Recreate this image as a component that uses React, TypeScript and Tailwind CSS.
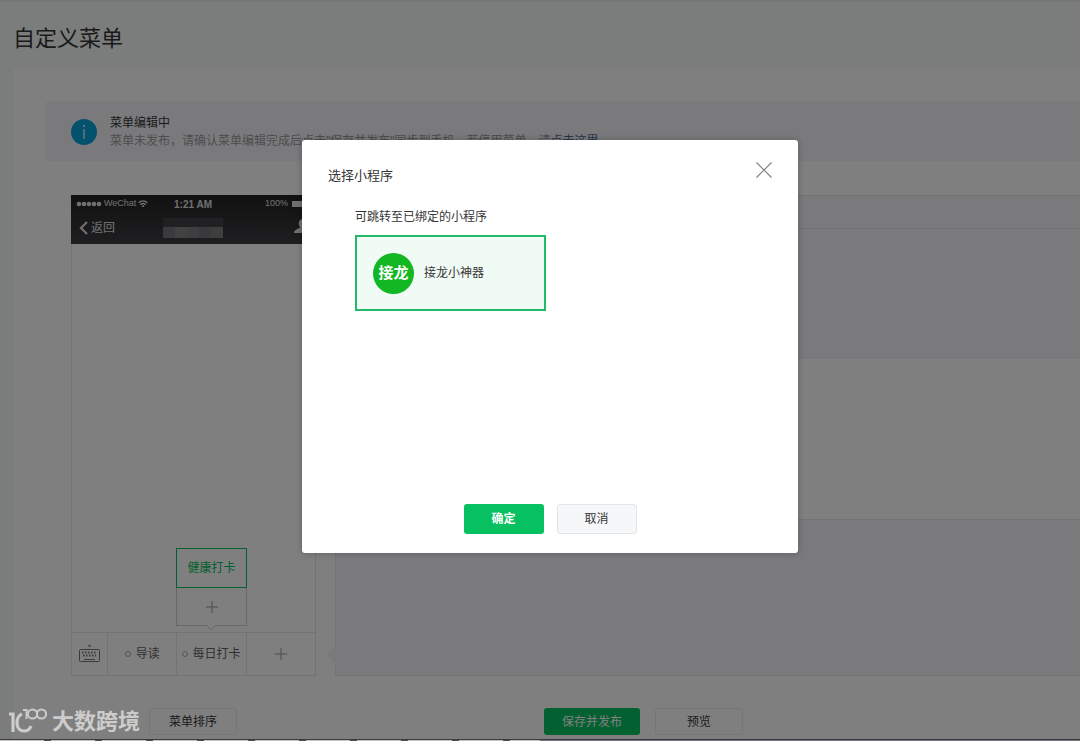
import { useState } from "react";

function Plus({ className }: { className: string }) {
  return (
    <svg viewBox="0 0 12 12" className={className} fill="none" stroke="currentColor">
      <path d="M6 0v12M0 6h12" />
    </svg>
  );
}

function PhonePreview() {
  return (
    <div className="flex h-[481px] w-[245px] shrink-0 flex-col border border-[#e7e7eb] bg-white">
      {/* Status bar + chat title */}
      <div className="-mx-px -mt-px h-[49px] bg-linear-to-b from-[#222224] to-[#3e3e42] text-[#e0e0e0]">
        <div className="flex h-[18px] items-center text-[9px]">
          <svg viewBox="0 0 26 6" className="ml-[5px] h-[6px] w-[26px]" fill="#e0e0e0">
            <circle cx="3" cy="3" r="2.3" />
            <circle cx="8" cy="3" r="2.3" />
            <circle cx="13" cy="3" r="2.3" />
            <circle cx="18" cy="3" r="2.3" />
            <circle cx="23" cy="3" r="2.3" />
          </svg>
          <span className="ml-[2px] w-[32px]">WeChat</span>
          <svg viewBox="0 0 10 8" className="ml-[2px] h-[8px] w-[10px]" fill="none" stroke="#e0e0e0" strokeWidth="1.4">
            <path d="M.6 2.8c2.6-2.4 6.2-2.4 8.8 0M2.3 4.7c1.6-1.4 3.800-1.400 5.400 0M4 6.500c.6-.5 1.400-.5 2 0" />
          </svg>
          <span className="ml-[26px] w-[70px] text-[10px] font-bold">1:21 AM</span>
          <span className="ml-[21px]">100%</span>
          <span className="ml-1 h-[6px] w-[16px] bg-[#e0e0e0]" />
        </div>
        <div className="flex h-[30px] items-center">
          <svg viewBox="0 0 9 14" className="ml-2 h-[14px] w-[9px]" fill="none" stroke="#e0e0e0" strokeWidth="2.200">
            <path d="M8 1L2 7l6 6" />
          </svg>
          <span className="ml-[3px] text-xs">返回</span>
          <span className="ml-12 flex h-[20px] w-[60px] flex-col">
            <span className="h-[9px] bg-[#434347]" />
            <span className="grid h-[11px] grid-cols-5">
              <span className="bg-[#77777a]" />
              <span className="bg-[#858583]" />
              <span className="bg-[#7f7f82]" />
              <span className="bg-[#747478]" />
              <span className="bg-[#7c7c7e]" />
            </span>
          </span>
          <svg viewBox="0 0 18 14" className="mr-1 mb-1 ml-auto h-[14px] w-[18px]" fill="#e0e0e0">
            <path d="M9 0c5 0 4.500 6 2.500 8 0 2 5.500 1.500 6 6H0c.5-4.500 6-4 6-6C4 6 4 0 9 0z" />
          </svg>
        </div>
      </div>

      {/* Submenu of the selected item */}
      <div className="mt-auto mb-[6px] ml-[104px] w-[71px]">
        <button className="block h-[40px] w-full border border-[#07c160] text-xs text-[#07c160]">健康打卡</button>
        <div className="relative">
          <button aria-label="添加子菜单" className="flex h-[38px] w-full items-center justify-center border border-t-0 border-[#d0d0d4] text-[#9a9a9a]">
            <Plus className="size-3" />
          </button>
          <svg viewBox="0 0 10 6" className="absolute -bottom-[5px] left-[30px] h-[6px] w-[10px]" fill="#fff" stroke="#d0d0d4">
            <path d="M0 0l5 5 5-5" />
          </svg>
        </div>
      </div>

      <div className="flex h-[43px] border-t border-[#e7e7eb] text-xs text-[#616161]">
        <div className="flex w-9 items-center justify-center border-r border-[#e7e7eb]">
          <svg viewBox="0 0 21 18" className="mb-[2px] h-[18px] w-[21px]" fill="none" stroke="#777">
            <path d="M8.500 2.500h4L10.500.5z" fill="#777" stroke="none" />
            <rect x=".5" y="5.500" width="20" height="12" rx="1" />
            <path d="M3 8.500h15M4 11.500h13" strokeWidth="2" strokeDasharray="1.500 1.500" />
            <path d="M5 15.500h11" />
          </svg>
        </div>
        <button className="flex flex-1 items-center justify-center gap-[5px] border-r border-[#e7e7eb]">
          <span className="size-[6px] rounded-full border border-[#a8a8a8]" />
          导读
        </button>
        <button className="flex flex-1 items-center justify-center gap-1 border-r border-[#e7e7eb]">
          <span className="size-[6px] rounded-full border border-[#a8a8a8]" />
          每日打卡
        </button>
        <button aria-label="添加菜单" className="flex flex-1 items-center justify-center text-[#9a9a9a]">
          <Plus className="size-3" />
        </button>
      </div>
    </div>
  );
}

function MenuForm() {
  return (
    <div className="relative ml-[19px] flex h-[481px] flex-1 flex-col border border-r-0 border-[#e7e7eb] bg-[#f4f5f9]">
      <div className="h-[33px] border-b border-[#e7e7eb]" />
      <div className="h-[128px]" />
      <div className="h-[163px] border-y border-[#e7e7eb] bg-white" />
      <svg viewBox="0 0 10 20" className="absolute -left-[10px] bottom-[10px] h-[20px] w-[10px]" fill="#f4f5f9">
        <path d="M10 0L0 10l10 10z" />
      </svg>
    </div>
  );
}

function Watermark() {
  return (
    <div className="absolute bottom-[3px] left-[9px] flex items-center gap-[5px] text-[#cccccc]">
      <svg viewBox="0 0 38 32" className="h-[32px] w-[38px]" fill="none" stroke="currentColor">
        <path d="M0 8h4v18" strokeWidth="3.200" />
        <path d="M13 8c-3 1-5 5-5 9 0 5 3 8 7 8 3 0 6-2 7-5" strokeWidth="3.200" />
        <path d="M14 4h3.500v9" strokeWidth="2" />
        <circle cx="23.500" cy="8" r="4.600" strokeWidth="2" />
        <circle cx="32.500" cy="8" r="4.600" strokeWidth="2" />
      </svg>
      <span className="text-[22px] leading-7 font-bold">大数跨境</span>
    </div>
  );
}

function MiniProgramDialog({ onClose }: { onClose: () => void }) {
  return (
    <div
      role="dialog"
      aria-labelledby="dialog-title"
      className="flex h-[413px] w-[496px] flex-col rounded-[3px] bg-white text-[#353535] shadow-[0_0_6px_rgba(0,0,0,0.25)]"
    >
      <div className="flex items-start justify-between px-[26px] pt-[22px]">
        <h2 id="dialog-title" className="mt-1 text-[13px] leading-5">选择小程序</h2>
        <button aria-label="关闭" onClick={onClose} className="text-[#808080]">
          <svg viewBox="0 0 16 16" className="size-4" fill="none" stroke="currentColor" strokeWidth="1.200">
            <path d="M.5.5l15 15M15.500.5l-15 15" />
          </svg>
        </button>
      </div>
      <div className="px-[53px] pt-[21px]">
        <p className="text-xs leading-5">可跳转至已绑定的小程序</p>
        <button className="mt-2 flex h-[76px] w-[191px] items-center gap-[10px] border-2 border-[#22b969] bg-[#f0fbf6] pl-4 text-xs">
          <span className="flex size-[41px] items-center justify-center rounded-full bg-[#11b824] text-[15px] font-bold text-white">
            接龙
          </span>
          接龙小神器
        </button>
      </div>
      <div className="mt-auto mb-[19px] flex justify-center gap-[13px] text-xs">
        <button onClick={onClose} className="h-[30px] w-20 rounded-[3px] bg-[#07c160] font-bold text-white">
          确定
        </button>
        <button onClick={onClose} className="h-[30px] w-20 rounded-[3px] border border-[#e4e5e9] bg-[#f6f7f9]">
          取消
        </button>
      </div>
    </div>
  );
}

export default function App() {
  const [open, setOpen] = useState(true);

  return (
    <div className="relative h-screen overflow-hidden bg-[#f6faf9] font-['Liberation_Sans','Noto_Sans_CJK_SC',sans-serif] text-[#353535]">
      <div className="border-t-2 border-[#ebedf2] pl-[13px]">
        <h1 className="h-[67px] pt-[21px] text-[22px] leading-8">自定义菜单</h1>
        <main className="bg-white pt-[33px] pb-8 pl-[33px]">
          {/* Notice */}
          <div className="flex h-[59px] items-center bg-[#f4f5f9] pl-[25px] text-xs">
            <span className="flex size-[26px] items-center justify-center rounded-full bg-[#04a4dc]">
              <svg viewBox="0 0 4 14" className="h-[14px] w-[4px]" fill="#fff">
                <circle cx="2" cy="1" r="1" />
                <path d="M1.400 4h1.200v10H1.400z" />
              </svg>
            </span>
            <div className="ml-[13px] pt-px leading-[18px]">
              <p>菜单编辑中</p>
              <p className="text-[#9a9a9a]">
                菜单未发布，请确认菜单编辑完成后点击"保存并发布"同步到手机。若停用菜单，请
                <a href="#" className="text-[#576b95]">点击这里</a>
              </p>
            </div>
          </div>

          <div className="mt-[34px] flex pl-[25px]">
            <PhonePreview />
            <MenuForm />
          </div>

          <div className="mt-8 flex pl-[103px] text-xs">
            <button className="h-[27px] w-[88px] rounded-[3px] border border-[#ececef]">菜单排序</button>
            <button className="ml-[307px] h-[27px] w-24 rounded-[3px] bg-[#07c160] text-white">保存并发布</button>
            <button className="ml-[15px] h-[27px] w-[88px] rounded-[3px] border border-[#ececef]">预览</button>
          </div>
        </main>
      </div>

      {open && (
        <div className="absolute inset-0 flex items-center justify-center bg-black/50 pb-12 pl-5">
          <MiniProgramDialog onClose={() => setOpen(false)} />
        </div>
      )}
      <Watermark />

      {/* Taskbar edge */}
      <div className="absolute inset-x-0 bottom-0 flex h-[2px] border-t border-[#3c3c3e] bg-[#6f7580]">
        <div className="w-1/2 bg-[repeating-linear-gradient(90deg,#c4c4c0_0_44px,#4a4a50_44px_51px)]" />
      </div>
    </div>
  );
}
